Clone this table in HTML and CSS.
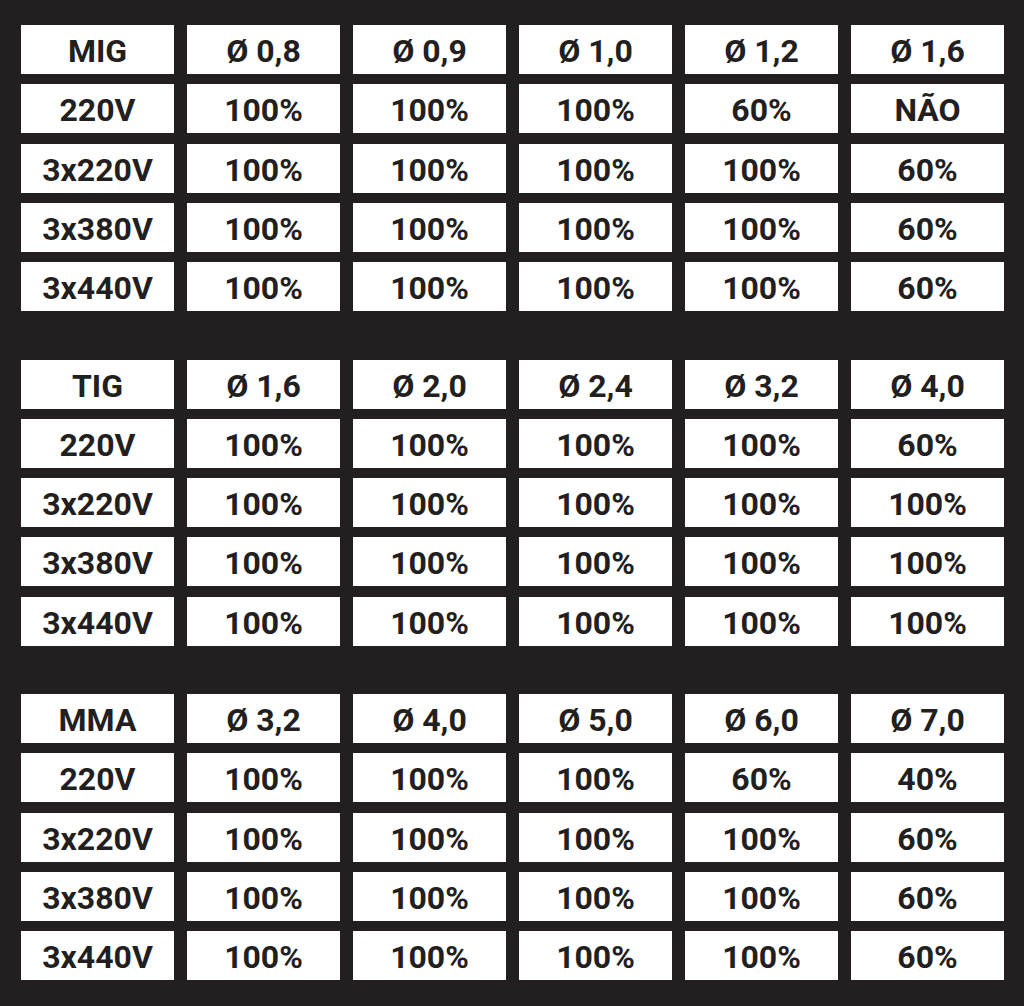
FILE: index.html
```html
<!DOCTYPE html>
<html lang="pt">
<head>
<meta charset="utf-8">
<title>Tabela de ciclo de trabalho</title>
<link rel="stylesheet" href="styles.css">
</head>
<body>
<div class="page">
  <div class="group">
    <div class="cell">MIG</div><div class="cell">Ø 0,8</div><div class="cell">Ø 0,9</div><div class="cell">Ø 1,0</div><div class="cell">Ø 1,2</div><div class="cell">Ø 1,6</div>
    <div class="cell">220V</div><div class="cell">100%</div><div class="cell">100%</div><div class="cell">100%</div><div class="cell">60%</div><div class="cell">NÃO</div>
    <div class="cell">3x220V</div><div class="cell">100%</div><div class="cell">100%</div><div class="cell">100%</div><div class="cell">100%</div><div class="cell">60%</div>
    <div class="cell">3x380V</div><div class="cell">100%</div><div class="cell">100%</div><div class="cell">100%</div><div class="cell">100%</div><div class="cell">60%</div>
    <div class="cell">3x440V</div><div class="cell">100%</div><div class="cell">100%</div><div class="cell">100%</div><div class="cell">100%</div><div class="cell">60%</div>
  </div>
  <div class="group">
    <div class="cell">TIG</div><div class="cell">Ø 1,6</div><div class="cell">Ø 2,0</div><div class="cell">Ø 2,4</div><div class="cell">Ø 3,2</div><div class="cell">Ø 4,0</div>
    <div class="cell">220V</div><div class="cell">100%</div><div class="cell">100%</div><div class="cell">100%</div><div class="cell">100%</div><div class="cell">60%</div>
    <div class="cell">3x220V</div><div class="cell">100%</div><div class="cell">100%</div><div class="cell">100%</div><div class="cell">100%</div><div class="cell">100%</div>
    <div class="cell">3x380V</div><div class="cell">100%</div><div class="cell">100%</div><div class="cell">100%</div><div class="cell">100%</div><div class="cell">100%</div>
    <div class="cell">3x440V</div><div class="cell">100%</div><div class="cell">100%</div><div class="cell">100%</div><div class="cell">100%</div><div class="cell">100%</div>
  </div>
  <div class="group">
    <div class="cell">MMA</div><div class="cell">Ø 3,2</div><div class="cell">Ø 4,0</div><div class="cell">Ø 5,0</div><div class="cell">Ø 6,0</div><div class="cell">Ø 7,0</div>
    <div class="cell">220V</div><div class="cell">100%</div><div class="cell">100%</div><div class="cell">100%</div><div class="cell">60%</div><div class="cell">40%</div>
    <div class="cell">3x220V</div><div class="cell">100%</div><div class="cell">100%</div><div class="cell">100%</div><div class="cell">100%</div><div class="cell">60%</div>
    <div class="cell">3x380V</div><div class="cell">100%</div><div class="cell">100%</div><div class="cell">100%</div><div class="cell">100%</div><div class="cell">60%</div>
    <div class="cell">3x440V</div><div class="cell">100%</div><div class="cell">100%</div><div class="cell">100%</div><div class="cell">100%</div><div class="cell">60%</div>
  </div>
</div>
</body>
</html>
```

FILE: styles.css
```css
html, body {
  margin: 0;
  padding: 0;
  background: #231f20;
}

.page {
  width: 1024px;
  height: 1006px;
  box-sizing: border-box;
  padding: 25px 20px 26px 21px;
  display: flex;
  flex-direction: column;
  gap: 48.5px;
}

.group {
  display: grid;
  grid-template-columns: repeat(6, 153px);
  grid-auto-rows: 49px;
  column-gap: 13px;
  row-gap: 10.25px;
}

.cell {
  background: #ffffff;
  color: #231f20;
  font-family: Roboto, "Liberation Sans", sans-serif;
  font-weight: 700;
  font-size: 32px;
  line-height: 1;
  display: flex;
  align-items: center;
  justify-content: center;
  padding-top: 3px;
  box-sizing: border-box;
}
```
